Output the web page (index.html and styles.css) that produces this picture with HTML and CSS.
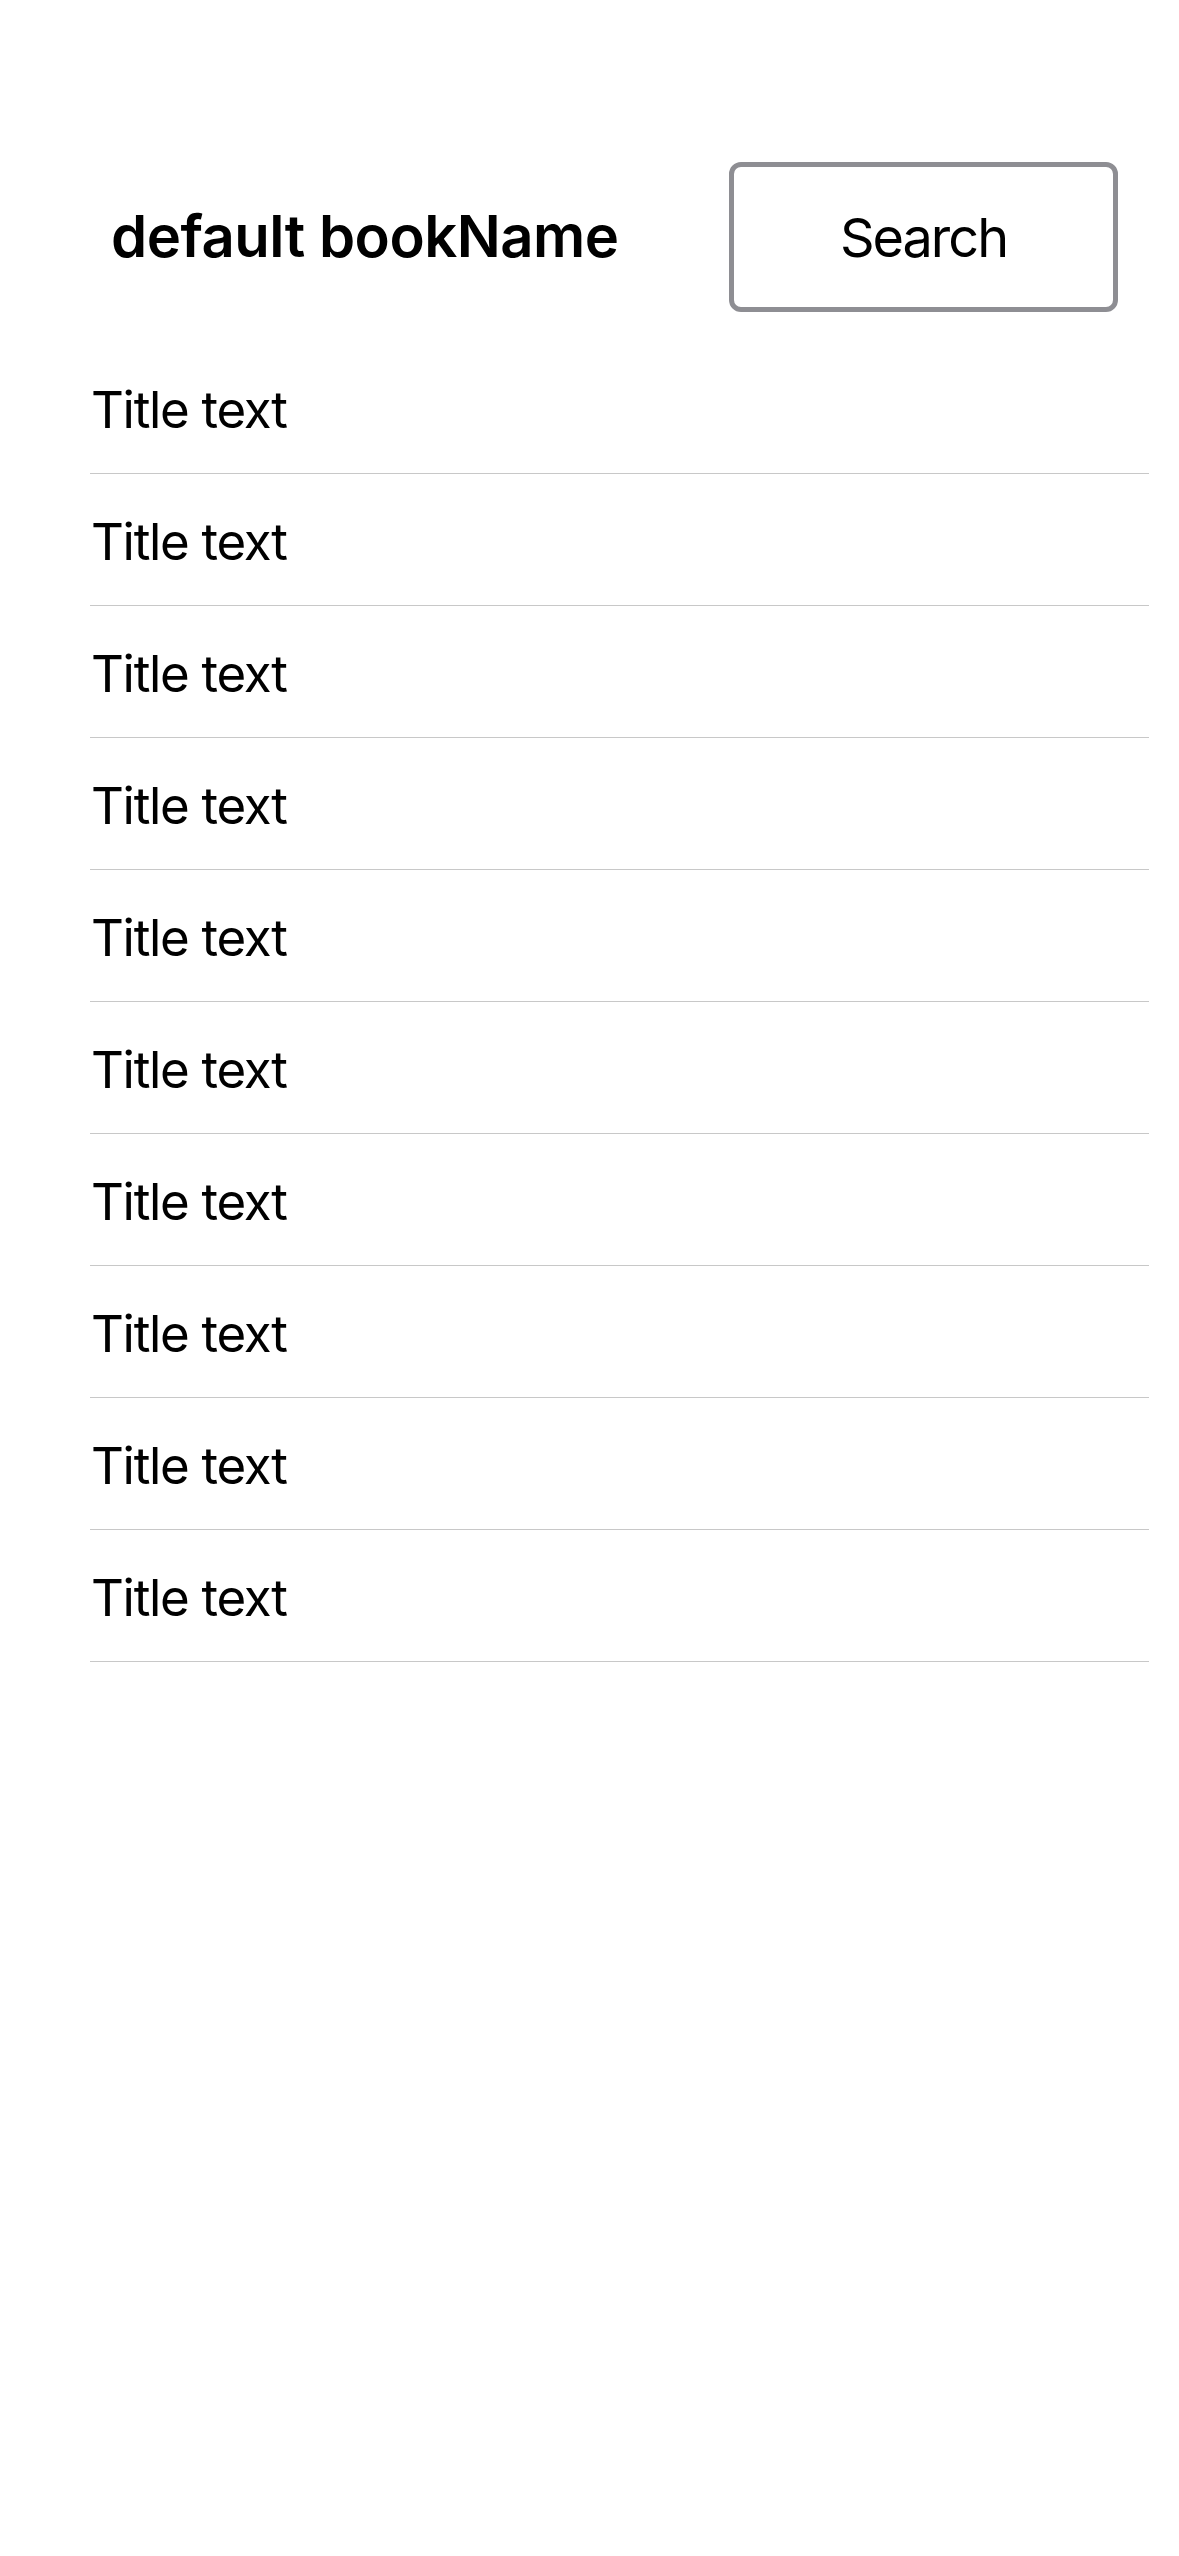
FILE: index.html
```html
<!DOCTYPE html>
<html>
<head>
<meta charset="utf-8">
<link rel="stylesheet" href="styles.css">
</head>
<body>
<div class="screen">
  <header class="header">
    <div class="book-name">default bookName</div>
    <button class="search-btn">Search</button>
  </header>
  <ul class="list">
    <li class="row">Title text</li>
    <li class="row">Title text</li>
    <li class="row">Title text</li>
    <li class="row">Title text</li>
    <li class="row">Title text</li>
    <li class="row">Title text</li>
    <li class="row">Title text</li>
    <li class="row">Title text</li>
    <li class="row">Title text</li>
    <li class="row">Title text</li>
  </ul>
</div>
</body>
</html>
```
FILE: styles.css
```css
html, body {
  margin: 0;
  padding: 0;
  background: #ffffff;
}
.screen {
  width: 1179px;
  height: 2556px;
  font-family: Inter, "Noto Sans", sans-serif;
  color: #000;
}
.header {
  display: flex;
  align-items: center;
  padding-top: 162px;
  padding-left: 111px;
  padding-right: 61px;
}
.book-name {
  font-size: 58px;
  font-weight: 600;
  letter-spacing: -0.5px;
  line-height: 1;
  padding-bottom: 2px;
}
.search-btn {
  margin-left: auto;
  width: 389px;
  height: 150px;
  border: 5px solid #8e8e93;
  border-radius: 12px;
  background: #fff;
  font-family: Inter, "Noto Sans", sans-serif;
  font-size: 54px;
  font-weight: 400;
  letter-spacing: -2px;
  color: #000;
  padding: 0;
}
.list {
  list-style: none;
  margin: 30px 0 0 90px;
  padding: 0;
  width: 1059px;
}
.row {
  display: flex;
  align-items: center;
  height: 128px;
  padding-top: 3px;
  border-bottom: 1px solid #c8c8c8;
  font-size: 51px;
  letter-spacing: -1.3px;
  line-height: 1;
  padding-left: 1px;
}
```
